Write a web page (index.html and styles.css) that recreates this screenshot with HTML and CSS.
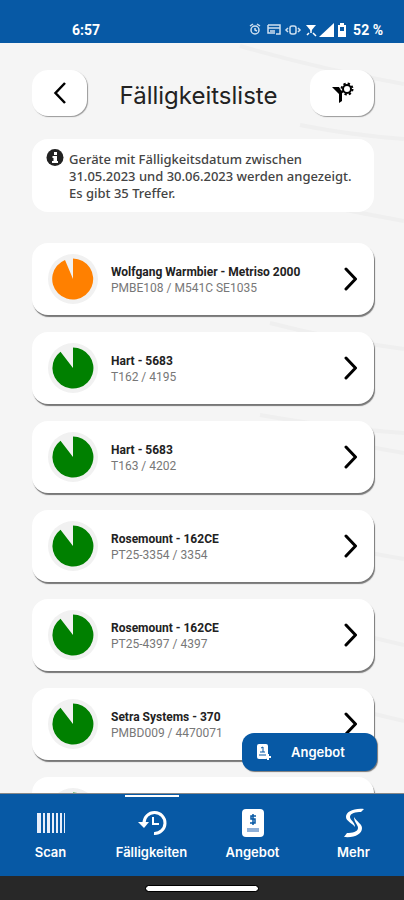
FILE: index.html
```html
<!DOCTYPE html>
<html lang="de">
<head>
<meta charset="utf-8">
<meta name="viewport" content="width=device-width, initial-scale=1">
<title>Fälligkeitsliste</title>
<link rel="stylesheet" href="styles.css">
</head>
<body>
<svg class="defs" aria-hidden="true">
  <symbol id="chevron" viewBox="0 0 14 24"><path d="M2 2l9.500 10L2 22" fill="none" stroke="#000" stroke-width="3" stroke-linecap="round" stroke-linejoin="round"/></symbol>
  <symbol id="pie-orange" viewBox="0 0 50 50"><circle cx="25" cy="25" r="25" fill="#f1f1f1"/><path d="M25 25V4.500A20.500 20.500 0 1 1 17 6z" fill="#ff8000"/></symbol>
  <symbol id="pie-green" viewBox="0 0 50 50"><circle cx="25" cy="25" r="25" fill="#f1f1f1"/><path d="M25 25V4.500A20.500 20.500 0 1 1 12.500 8.700z" fill="#008000"/></symbol>
</svg>

<header class="status">
  <span>6:57</span>
  <span class="status-right">
    <svg width="82" height="16" viewBox="0 0 82 16" fill="none" stroke="#cfe0f0" stroke-width="1.500" aria-hidden="true">
      <circle cx="6" cy="8" r="4"/><path d="M6 6v2l2 1M1 4l3-2M11 4L8 2"/>
      <path d="M19 3h12v6M19 3v8h7M19 6h12M21 9h5M27 12h4V9"/>
      <rect x="41" y="4" width="6" height="8" rx="2"/><path d="M39 6l-2 2 2 2M49 6l2 2-2 2"/>
      <path d="M57 3h10l-5 6z" fill="#fff" stroke="none"/><path d="M62 7v4M58 13l2-2M64 11l3 3" stroke="#fff"/>
    </svg>
    <svg width="30" height="16" viewBox="0 0 30 16" fill="#fff" aria-hidden="true">
      <path d="M0 15L15 1v14z"/><path fill-rule="evenodd" d="M21 1h4v2h2v12h-8V3h2zM21 5v4h4V5z"/>
    </svg>
    <span>52 %</span>
  </span>
</header>

<main class="content">
  <svg class="backdrop" viewBox="0 0 404 750" preserveAspectRatio="xMaxYMin slice" fill="none" stroke="#efefef" stroke-width="4" aria-hidden="true">
    <path d="M240 3Q320 26 404 41M300 82Q350 92 404 96M310 160Q360 170 404 178M270 280Q340 298 404 306M260 372Q340 386 404 390M370 404l34 6M370 510l34 6M370 594l34 8M370 670l34 8"/>
  </svg>
  <div class="titlebar">
    <button class="tile back" type="button" aria-label="Zurück">
      <svg width="14" height="24" viewBox="0 0 14 24" aria-hidden="true"><path d="M12 2L2.500 12 12 22" fill="none" stroke="#000" stroke-width="2.500"/></svg>
    </button>
    <h1>Fälligkeitsliste</h1>
    <button class="tile filter" type="button" aria-label="Filter">
      <svg width="24" height="24" viewBox="0 0 24 24" aria-hidden="true">
        <path d="M2 6h7l3 5v9l-3 2v-9z" fill="#000"/>
        <circle cx="17" cy="8" r="4" fill="none" stroke="#000" stroke-width="2"/>
        <circle cx="17" cy="8" r="5.500" fill="none" stroke="#000" stroke-width="2" stroke-dasharray="2.300 2.020"/>
      </svg>
    </button>
  </div>

  <section class="info">
    <svg width="18" height="18" viewBox="0 0 18 18" aria-hidden="true"><circle cx="9" cy="8.500" r="8.500" fill="#222"/><path d="M8 3h3v3H8zM6.500 7H11v5h1v2H6v-2h1.500V9h-1z" fill="#fff"/></svg>
    <p>Geräte mit Fälligkeitsdatum zwischen 31.05.2023 und 30.06.2023 werden angezeigt. Es gibt 35 Treffer.</p>
  </section>

  <div class="list">
    <a class="card" href="#"><svg class="pie"><use href="#pie-orange"/></svg><span class="text"><strong>Wolfgang Warmbier - Metriso 2000</strong><span>PMBE108 / M541C SE1035</span></span><svg class="chevron"><use href="#chevron"/></svg></a>
    <a class="card" href="#"><svg class="pie"><use href="#pie-green"/></svg><span class="text"><strong>Hart - 5683</strong><span>T162 / 4195</span></span><svg class="chevron"><use href="#chevron"/></svg></a>
    <a class="card" href="#"><svg class="pie"><use href="#pie-green"/></svg><span class="text"><strong>Hart - 5683</strong><span>T163 / 4202</span></span><svg class="chevron"><use href="#chevron"/></svg></a>
    <a class="card" href="#"><svg class="pie"><use href="#pie-green"/></svg><span class="text"><strong>Rosemount - 162CE</strong><span>PT25-3354 / 3354</span></span><svg class="chevron"><use href="#chevron"/></svg></a>
    <a class="card" href="#"><svg class="pie"><use href="#pie-green"/></svg><span class="text"><strong>Rosemount - 162CE</strong><span>PT25-4397 / 4397</span></span><svg class="chevron"><use href="#chevron"/></svg></a>
    <a class="card" href="#"><svg class="pie"><use href="#pie-green"/></svg><span class="text"><strong>Setra Systems - 370</strong><span>PMBD009 / 4470071</span></span><svg class="chevron"><use href="#chevron"/></svg></a>
    <div class="card"><svg class="pie"><use href="#pie-green"/></svg></div>
  </div>

  <button class="offer" type="button">
    <svg width="16" height="16" viewBox="0 0 16 16" aria-hidden="true"><rect x="1" width="11" height="15" rx="2" fill="#fff"/><path d="M5 4l2-1v5M4 8h5M3 11h7" fill="none" stroke="#0759a5"/><path d="M12 10v6M9 13h6" fill="none" stroke="#fff" stroke-width="2"/></svg>
    <span>Angebot</span>
  </button>
</main>

<nav class="tabs">
  <a href="#">
    <svg width="30" height="30" viewBox="0 0 30 30" fill="#e8eefa" aria-hidden="true"><path d="M1 5h4v20H1zM7 5h2v20H7zM11 5h3v20h-3zM16 5h2v20h-2zM20 5h2v20h-2zM24 5h2v20h-2zM28 5h1v20h-1z"/></svg>
    <span>Scan</span>
  </a>
  <a class="active" href="#" aria-current="page">
    <svg width="30" height="30" viewBox="0 0 30 30" fill="none" stroke="#fff" stroke-width="3" aria-hidden="true"><path d="M7 15A10.500 10.500 0 1 1 17 25.500"/><path d="M1 14h11l-5 6z" fill="#fff" stroke="none"/><path d="M16 9v7h6" stroke-width="2"/></svg>
    <span>Fälligkeiten</span>
  </a>
  <a href="#">
    <svg width="30" height="30" viewBox="0 0 30 30" aria-hidden="true"><rect x="4" y="1" width="22" height="28" rx="4" fill="#fff"/><path d="M18 8h-5v3h4v4h-5M15 6v11" fill="none" stroke="#0759a5" stroke-width="1.500"/><path d="M9 20h12v4H9z" fill="#8fb0d8"/></svg>
    <span>Angebot</span>
  </a>
  <a href="#">
    <svg width="30" height="30" viewBox="0 0 30 30" fill="#fff" aria-hidden="true"><path d="M25 1C14 0 7 4 7 9c0 4 6 6 9 10 0-5-5-7-5-10 0-4 6-5 11-5zM5 29c11 1 18-3 18-9 0-4-5-6-8-11 0 5 4 8 4 11 0 4-6 5-11 5z"/></svg>
    <span>Mehr</span>
  </a>
</nav>
<footer class="system"><span></span></footer>
</body>
</html>
```
FILE: styles.css
```css
* { box-sizing: border-box; }

body {
  margin: 0;
  height: 100vh;
  display: flex;
  flex-direction: column;
  background: #f5f5f5;
  color: #222;
  font-family: Roboto, "Liberation Sans", sans-serif;
}

a { color: inherit; text-decoration: none; }
button { border: 0; padding: 0; font: inherit; cursor: pointer; }
svg { flex: none; display: block; }
.defs { position: absolute; width: 0; height: 0; }

.status {
  display: flex;
  justify-content: space-between;
  align-items: flex-end;
  height: 43px;
  padding: 0 21px 4px 72px;
  background: #0759a5;
  color: #fff;
  font-size: 14px;
  font-weight: 700;
  line-height: 18px;
}
.status-right { display: flex; align-items: center; gap: 4px; }
.status-right svg:first-child { margin-right: -16px; }

.content {
  position: relative;
  flex: 1;
  min-height: 0;
  overflow: hidden;
  padding: 27px 30px 0 32px;
}
.backdrop { position: absolute; inset: 0; width: 100%; height: 100%; z-index: -1; }

.titlebar { display: flex; justify-content: space-between; align-items: center; }
.titlebar h1 {
  margin: 6px 0 0;
  font-family: Inter, "Open Sans", sans-serif;
  font-size: 24px;
  font-weight: 400;
  line-height: 30px;
}
.tile {
  display: flex;
  justify-content: center;
  align-items: center;
  height: 46px;
  border-radius: 16px;
  background: #fff;
  box-shadow: 1px 1px 1px #999;
}
.back { width: 55px; }
.filter { width: 64px; }

.info {
  display: flex;
  gap: 5px;
  margin-top: 23px;
  padding: 10px 14px;
  border-radius: 16px;
  background: #fff;
  color: #444;
  font-family: "Noto Sans", sans-serif;
  font-size: 13px;
  font-weight: 500;
  line-height: 17px;
}
.info p { margin: 0; padding-top: 2px; }

.list { display: flex; flex-direction: column; gap: 17px; margin-top: 31px; }
.card {
  display: flex;
  align-items: center;
  height: 72px;
  padding: 0 16px;
  border-radius: 16px;
  background: #fff;
  box-shadow: 1px 2px 1px #777;
}
.pie { width: 50px; height: 50px; }
.chevron { width: 14px; height: 24px; }
.text {
  flex: 1;
  display: flex;
  flex-direction: column;
  margin-left: 13px;
  padding-top: 2px;
  color: #777;
  font-size: 12px;
  line-height: 16px;
}
.text strong { color: #222; font-weight: 700; }

.offer {
  position: absolute;
  right: 27px;
  bottom: 22px;
  display: flex;
  align-items: center;
  gap: 19px;
  width: 135px;
  height: 38px;
  padding: 0 14px;
  border-radius: 12px;
  background: #0759a5;
  box-shadow: 1px 1px 1px #777;
}
.offer, .tabs {
  color: #fff;
  font-family: Inter, "Open Sans", sans-serif;
  font-size: 13px;
  font-weight: 600;
  line-height: 18px;
}

.tabs {
  display: grid;
  grid-template-columns: repeat(4, 1fr);
  height: 83px;
  border-top: 1px solid #888;
  background: #0759a5;
}
.tabs a {
  position: relative;
  display: flex;
  flex-direction: column;
  align-items: center;
  gap: 5px;
  padding-top: 14px;
}
.tabs .active::before {
  content: "";
  position: absolute;
  top: 1px;
  width: 54px;
  height: 2px;
  background: #fff;
}

.system {
  display: flex;
  justify-content: center;
  align-items: center;
  height: 24px;
  background: #282828;
}
.system span { width: 112px; height: 5px; border-radius: 3px; background: #fff; outline: 1px solid #000; }
```
